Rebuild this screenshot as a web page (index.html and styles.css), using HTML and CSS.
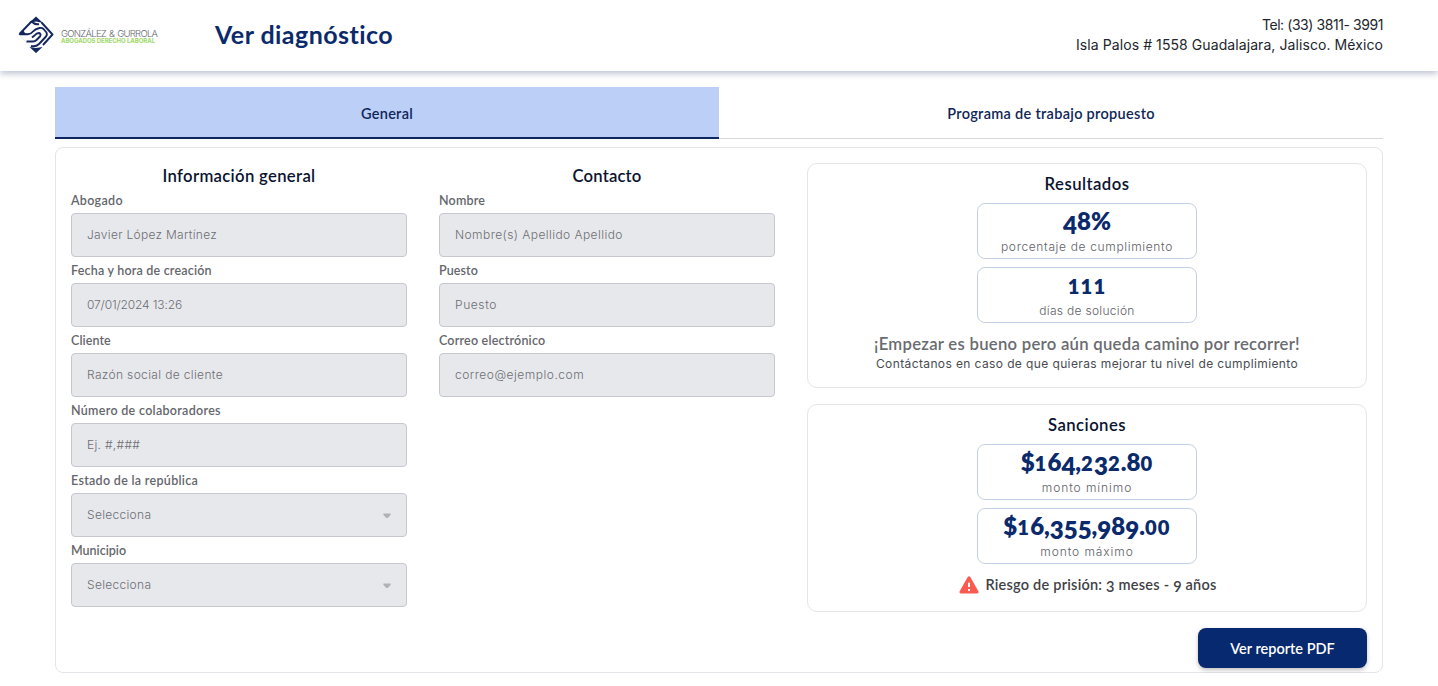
FILE: index.html
```
<!DOCTYPE html>
<html lang="es">
<head>
<meta charset="utf-8">
<title>Ver diagnóstico</title>
<link rel="stylesheet" href="styles.css">
</head>
<body>
<header class="topbar">
  <div class="brand">
    <svg class="brand-mark" width="36" height="38" viewBox="0 0 36 38">
      <path d="M18 1 L35 18.500 L18 37 L1 18.500 Z" fill="#fff" stroke="#d9dce5" stroke-width=".6"/>
      <path d="M18 .5 L25 7 L18 5.500 L11 7 Z M18 37 L11.500 31 L18 32 L24.500 31 Z M.5 19 L5 14 L7 17 L11 19 Z" fill="#14275e"/>
      <g fill="none" stroke="#14275e" stroke-width="1.900" stroke-linejoin="round">
        <path d="M1.500 18 L13.500 5.500 Q17 9 21 8"/>
        <path d="M2 18.200 H10 Q13 18 15 15.500 T21.500 12 Q24 11.500 25.500 13 L28.500 16.500 Q29.500 18.500 28 20.500 L21 28 Q18 31 13 30"/>
        <path d="M23.500 6.500 L34.500 18.500 L25 29"/>
        <path d="M8.500 25.500 H15 Q17 25.500 18.500 24 L22 20.500 Q23.500 18 21 17 Q18.500 17 16.500 19.500 L14 21.500"/>
      </g>
    </svg>
    <div class="brand-text">
      <span class="brand-name">GONZÁLEZ &amp; GURROLA</span>
      <span class="brand-sub">ABOGADOS DERECHO LABORAL</span>
    </div>
  </div>
  <h1 class="page-title">Ver diagnóstico</h1>
  <div class="contact-info">
    <div class="tel">Tel: (33) 3811- 3991</div>
    <div class="addr">Isla Palos # 1558 Guadalajara, Jalisco. México</div>
  </div>
</header>

<main class="content">
  <nav class="tabs">
    <a class="tab active">General</a>
    <a class="tab">Programa de trabajo propuesto</a>
  </nav>

  <section class="panel">
    <div class="column">
      <h2 class="heading">Información general</h2>
      <label class="label wide">Abogado</label>
      <div class="field ls-3">Javier López Martínez</div>
      <label class="label">Fecha y hora de creación</label>
      <div class="field ls-neg">07/01/2024 13:26</div>
      <label class="label tight">Cliente</label>
      <div class="field">Razón social de cliente</div>
      <label class="label wide">Número de colaboradores</label>
      <div class="field ls-3">Ej. #,###</div>
      <label class="label wide">Estado de la república</label>
      <div class="field ls-3">Selecciona
        <svg class="caret" width="8" height="6" viewBox="0 0 8 6"><path d="M.5.5h7q.5.5 0 1.500L5 4.700q-1 .8-2 0L.5 2Q0 1 .5.500Z" fill="#b0b2b7"/></svg>
      </div>
      <label class="label none">Municipio</label>
      <div class="field ls-3">Selecciona
        <svg class="caret" width="8" height="6" viewBox="0 0 8 6"><path d="M.5.5h7q.5.5 0 1.500L5 4.700q-1 .8-2 0L.5 2Q0 1 .5.500Z" fill="#b0b2b7"/></svg>
      </div>
    </div>

    <div class="column">
      <h2 class="heading close">Contacto</h2>
      <label class="label">Nombre</label>
      <div class="field ls-4">Nombre(s) Apellido Apellido</div>
      <label class="label tight">Puesto</label>
      <div class="field ls-6">Puesto</div>
      <label class="label">Correo electrónico</label>
      <div class="field ls-5">correo@ejemplo.com</div>
    </div>

    <div class="results">
      <div class="card">
        <h2 class="heading open">Resultados</h2>
        <div class="stat">
          <div class="value"><span class="low">4</span>8%</div>
          <div class="caption ls-65">porcentaje de cumplimiento</div>
        </div>
        <div class="stat">
          <div class="value"><span class="small">111</span></div>
          <div class="caption ls-3">días de solución</div>
        </div>
        <p class="message">¡Empezar es bueno pero aún queda camino por recorrer!</p>
        <p class="hint">Contáctanos en caso de que quieras mejorar tu nivel de cumplimiento</p>
      </div>
      <div class="card sanctions">
        <h2 class="heading open">Sanciones</h2>
        <div class="stat">
          <div class="value">$<span class="small">1</span>6<span class="low">4</span>,<span class="small">2</span><span class="low">3</span><span class="small">2</span>.8<span class="small">0</span></div>
          <div class="caption ls-9">monto mínimo</div>
        </div>
        <div class="stat">
          <div class="value">$<span class="small">1</span>6,<span class="low">355</span>,<span class="low">9</span>8<span class="low">9</span>.<span class="small">00</span></div>
          <div class="caption ls-9">monto máximo</div>
        </div>
        <div class="risk">
          <svg width="20" height="18" viewBox="0 0 20 18">
            <path d="M8.700 1.100q1.300-1.700 2.600 0l8 14.200q.8 1.900-1.200 2.200H1.900Q-.1 17.200.700 15.300Z" fill="#fa5a50"/>
            <path d="M10 6.800v4.200M10 12.900v2" stroke="#fff" stroke-width="2"/>
          </svg>
          <span>Riesgo de prisión: <span class="low">3</span> meses - <span class="low">9</span> años</span>
        </div>
      </div>
      <button class="pdf-button">Ver reporte PDF</button>
    </div>
  </section>
</main>
</body>
</html>
```
FILE: styles.css
```
* { box-sizing: border-box; }
body { margin: 0; background: #fff; font-family: Inter, sans-serif; }
h1, h2, p { margin: 0; }

.topbar {
  height: 71px;
  display: flex;
  align-items: center;
  padding: 0 55px 2px 18px;
  background: #fff;
  box-shadow: 0 3px 6px rgba(20, 39, 94, .26);
}
.brand { display: flex; align-items: center; gap: 7px; width: 197px; }
.brand-mark { flex: none; }
.brand-text { display: flex; flex-direction: column; white-space: nowrap; padding-top: 3px; }
.brand-name { font-size: 9.5px; line-height: 9px; font-weight: 300; letter-spacing: -.71px; word-spacing: 1px; color: #666a70; }
.brand-sub { font-size: 6px; line-height: 6px; font-weight: 700; letter-spacing: -.04px; color: #9dd866; }

.page-title { font: 700 25px/30px Lato, sans-serif; letter-spacing: .45px; color: #0a2a6c; padding-bottom: 2px; }
.contact-info { margin-left: auto; text-align: right; font-size: 14px; line-height: 20px; color: #22252b; }
.tel { letter-spacing: -.43px; }
.addr { letter-spacing: .08px; }

.content { padding: 16px 55px 0; }
.tabs { display: flex; height: 52px; border-bottom: 1px solid #d6d7da; }
.tab {
  flex: 1;
  height: 52px;
  display: flex;
  align-items: center;
  justify-content: center;
  padding-top: 1px;
  font: 600 14.5px/20px Lato, sans-serif;
  letter-spacing: .3px;
  color: #102658;
}
.tab.active { background: #bccff7; border-bottom: 2px solid #0e2660; padding-top: 3px; }

.panel {
  display: flex;
  gap: 32px;
  height: 526px;
  margin-top: 8px;
  padding: 15px 15px 0;
  border: 1px solid #e4e5e8;
  border-radius: 8px;
}
.column { width: 336px; }
.heading { height: 24px; font: 600 16.7px/26px Lato, sans-serif; letter-spacing: .32px; text-align: center; color: #0a1330; }
.heading.close { letter-spacing: .15px; }
.heading.open { letter-spacing: .45px; }
.label { display: block; height: 26px; font: 600 12.5px/28px Lato, sans-serif; letter-spacing: .2px; color: #64666b; }
.label.wide { letter-spacing: .3px; }
.label.tight { letter-spacing: .1px; }
.label.none { letter-spacing: 0; }
.field {
  display: flex;
  align-items: center;
  justify-content: space-between;
  height: 44px;
  padding: 0 15px 2px;
  border: 1px solid #c6c8ce;
  border-radius: 4px;
  background: #e7e8ec;
  font-size: 12px;
  font-weight: 300;
  letter-spacing: .35px;
  color: #6c6e73;
}
.caret { margin-top: 3px; }
.ls-neg { letter-spacing: -.14px; }
.ls-3 { letter-spacing: .3px; }
.ls-4 { letter-spacing: .43px; }
.ls-5 { letter-spacing: .5px; }
.ls-6 { letter-spacing: .6px; }
.ls-65 { letter-spacing: .65px; }
.ls-9 { letter-spacing: .92px; }

.results { flex: 1; display: flex; flex-direction: column; }
.card {
  display: flex;
  flex-direction: column;
  align-items: center;
  height: 225px;
  padding-top: 7px;
  border: 1px solid #e4e5e8;
  border-radius: 10px;
}
.sanctions { height: 208px; margin-top: 16px; }
.stat {
  width: 220px;
  height: 56px;
  margin-top: 8px;
  border: 1px solid #c3d0e8;
  border-radius: 8px;
  text-align: center;
}
.value { height: 33px; padding-top: 2px; font: 800 24px/30px Lato, sans-serif; color: #0a2a6c; }
.low { vertical-align: -.15em; line-height: 0; }
.small { font-size: .84em; letter-spacing: .06em; line-height: 0; }
.caption { font-size: 12px; line-height: 20px; font-weight: 300; color: #5e6065; }
.message { margin-top: 11px; font: 600 16.7px/20px Lato, sans-serif; letter-spacing: .27px; color: #696b70; }
.hint { font-size: 12px; line-height: 19px; letter-spacing: .39px; color: #494b50; }
.risk {
  display: flex;
  align-items: center;
  gap: 6px;
  height: 20px;
  margin: 11px 0 0 2px;
  font: 600 14.5px/20px Lato, sans-serif;
  letter-spacing: .23px;
  color: #3f4146;
}
.pdf-button {
  align-self: flex-end;
  width: 169px;
  height: 40px;
  margin-top: 16px;
  padding: 1px 0 0;
  border: 0;
  border-radius: 8px;
  background: #07296f;
  box-shadow: 0 2px 4px rgba(0, 0, 0, .25);
  color: #fff;
  font: 600 14.5px/20px Lato, sans-serif;
}
```
